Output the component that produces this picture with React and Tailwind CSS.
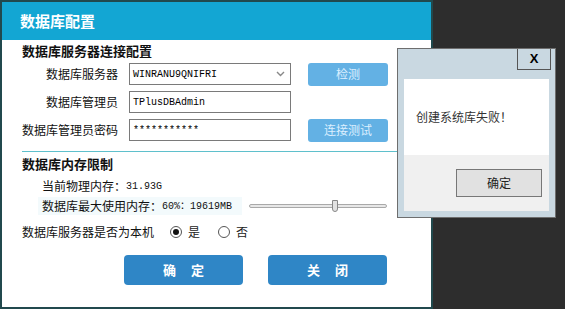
import React from "react";

const cjk = { fontFamily: '"Noto Sans CJK SC", "Noto Sans", sans-serif' };
const mono = { fontFamily: '"Liberation Mono", "Noto Sans CJK SC", monospace' };

function Radio({ checked, label }) {
  return (
    <div className="flex items-center gap-[6px]">
      <span className="w-[12px] h-[12px] rounded-full border border-[#555] bg-white flex items-center justify-center">
        {checked && <span className="w-[6px] h-[6px] rounded-full bg-[#111]" />}
      </span>
      <span className="text-[12px] leading-[16px] text-[#222]">{label}</span>
    </div>
  );
}

function Row({ label, children, button }) {
  return (
    <div className="flex items-center h-[22px]">
      <div className="w-[116px] text-right text-[12px] leading-[16px] text-[#111]">{label}</div>
      <div className="ml-[11px] w-[162px] h-[22px]">{children}</div>
      {button ? (
        <button className="ml-[17px] w-[80px] h-[23px] rounded-[3px] bg-[#63b1e4] text-[#dcefff] text-[12px] leading-[16px]">
          {button}
        </button>
      ) : null}
    </div>
  );
}

export default function App() {
  return (
    <div className="relative w-[565px] h-[309px] bg-[#2d2d2d] overflow-hidden" style={cjk}>
      <div className="w-[433px] h-[309px] border-2 border-[#21494d] bg-white flex flex-col">
        <div className="h-[38px] bg-[#13a6d3] px-[18px] flex items-center text-white text-[15px] font-bold">
          数据库配置
        </div>

        <div className="flex-1 flex flex-col">
          <div className="mt-[3px] ml-[20px] h-[16px] leading-[16px] text-[13px] font-bold text-[#111]">
            数据库服务器连接配置
          </div>

          <div className="mt-[4px] flex flex-col gap-[6px]">
            <Row label="数据库服务器" button="检测">
              <div className="h-full border border-[#7a7a7a] bg-white flex items-center justify-between pl-[3px] pr-[5px]">
                <span className="text-[10px] text-black" style={mono}>WINRANU9QNIFRI</span>
                <svg width="9" height="6" viewBox="0 0 9 6">
                  <path d="M1 1 L4.5 4.5 L8 1" fill="none" stroke="#888" strokeWidth="1.4" />
                </svg>
              </div>
            </Row>
            <Row label="数据库管理员">
              <div className="h-full border border-[#7a7a7a] bg-white flex items-center pl-[3px]">
                <span className="text-[10px] text-black" style={mono}>TPlusDBAdmin</span>
              </div>
            </Row>
            <Row label="数据库管理员密码" button="连接测试">
              <div className="h-full border border-[#7a7a7a] bg-white flex items-center pl-[3px]">
                <span className="text-[10px] text-black" style={mono}>***********</span>
              </div>
            </Row>
          </div>

          <div className="mt-[10px] ml-[20px] mr-[18px] h-px bg-[#5fc0cc]" />

          <div className="mt-[4px] ml-[20px] h-[16px] leading-[16px] text-[13px] font-bold text-[#111]">
            数据库内存限制
          </div>

          <div className="mt-[6px] ml-[40px] h-[16px] flex items-center text-[12px] text-[#111]">
            <span>当前物理内存：</span>
            <span className="text-[10px]" style={mono}>31.93G</span>
          </div>

          <div className="mt-[3px] flex items-center h-[18px]">
            <div className="ml-[36px] w-[204px] h-[18px] bg-[#f3fafc] flex items-center pl-[4px] text-[12px] text-[#111]">
              <span>数据库最大使用内存：</span>
              <span className="text-[10px]" style={mono}>60%：19619MB</span>
            </div>
            <div className="relative ml-[7px] w-[138px] h-[4px] rounded-full border border-[#a9a9a9] bg-[#e7e7e7]">
              <div className="absolute left-[82px] top-[-5px] w-[6px] h-[12px] rounded-b-[3px] border border-[#888] bg-[#e2e2e2]" />
            </div>
          </div>

          <div className="mt-[9px] ml-[20px] h-[16px] flex items-center">
            <span className="w-[148px] text-[12px] leading-[16px] text-[#111]">数据库服务器是否为本机</span>
            <div className="flex items-center gap-[18px]">
              <Radio checked label="是" />
              <Radio label="否" />
            </div>
          </div>

          <div className="mt-[15px] ml-[122px] flex gap-[25px]">
            <button className="w-[119px] h-[30px] rounded-[4px] bg-[#2f86c6] text-white text-[13px] font-bold tracking-[15px] pl-[15px]">
              确定
            </button>
            <button className="w-[119px] h-[30px] rounded-[4px] bg-[#2f86c6] text-white text-[13px] font-bold tracking-[15px] pl-[15px]">
              关闭
            </button>
          </div>
        </div>
      </div>

      <div className="absolute left-[397px] top-[48px] w-[159px] h-[170px] border border-[#6e6e6e] bg-[#c9d8e1] flex flex-col">
        <div className="h-[30px] flex justify-end pr-[4px]">
          <div className="w-[34px] h-[21px] border border-t-0 border-[#555] flex items-center justify-center text-[13px] font-bold text-black" style={{ fontFamily: '"Liberation Sans", sans-serif' }}>
            X
          </div>
        </div>
        <div className="ml-[6px] w-[145px] flex flex-col">
          <div className="h-[76px] bg-white pl-[12px] pt-[30px] text-[12px] leading-[16px] text-[#333]">
            创建系统库失败！
          </div>
          <div className="h-[56px] bg-[#f0f0f0] flex justify-end pr-[7px] pt-[14px]">
            <button className="w-[86px] h-[28px] border border-[#777] bg-[#e1e1e1] text-[12px] text-[#222]">
              确定
            </button>
          </div>
        </div>
      </div>
    </div>
  );
}
